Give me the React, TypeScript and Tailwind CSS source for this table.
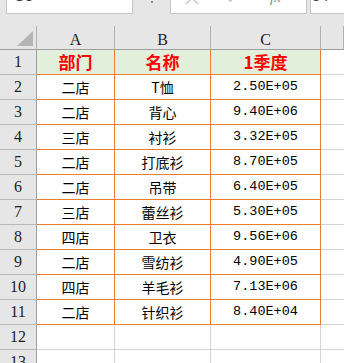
import React from 'react';
import { X, Check } from 'lucide-react';

const rows: [string, string, string][] = [
  ['二店', 'T恤', '2.50E+05'],
  ['二店', '背心', '9.40E+06'],
  ['三店', '衬衫', '3.32E+05'],
  ['二店', '打底衫', '8.70E+05'],
  ['二店', '吊带', '6.40E+05'],
  ['三店', '蕾丝衫', '5.30E+05'],
  ['四店', '卫衣', '9.56E+06'],
  ['二店', '雪纺衫', '4.90E+05'],
  ['四店', '羊毛衫', '7.13E+06'],
  ['二店', '针织衫', '8.40E+04'],
];

const rowHead =
  'h-[25px] flex items-center justify-center bg-[#e6e6e6] border-r border-b border-r-[#9e9e9e] border-b-[#b8b8b8] font-["Liberation_Serif",serif] text-[16px] text-[#1f1f1f]';
const orangeCell = 'h-[25px] flex items-center justify-center border-r border-b border-[#ed7d31]';
const plainCell = 'h-[25px] border-r border-b border-[#d4d4d4]';
const cjk = 'font-["Noto_Sans_CJK_SC",sans-serif]';

export default function App() {
  return (
    <div className="w-[344px] h-[363px] overflow-hidden bg-white">
      {/* formula bar, mostly scrolled out of view */}
      <div className="h-[26px] bg-[#e6e6e6] flex items-start">
        <div className="ml-[6px] w-[127px] h-[14px] bg-white border border-t-0 border-[#c6c6c6] overflow-hidden">
          <div className="-mt-[13px] pl-[7px] text-[15px] leading-[18px] text-[#333] font-['Liberation_Sans',sans-serif]">C3</div>
        </div>
        <div className="ml-[18px] mt-[1px] w-[2px] h-[2px] bg-[#8c8c8c]" />
        <div className="ml-[17px] w-[137px] h-[14px] bg-white border border-t-0 border-[#c6c6c6] overflow-hidden flex items-start">
          <X className="ml-[10px] -mt-[13px] w-[22px] h-[22px] text-[#c4c4c4]" strokeWidth={1.5} />
          <Check className="ml-[19px] -mt-[15px] w-[22px] h-[22px] text-[#c4c4c4]" strokeWidth={2.5} />
          <div className="ml-[26px] -mt-[11px] text-[15px] leading-[16px] italic text-[#8a8a8a] font-['Liberation_Serif',serif]">fx</div>
        </div>
        <div className="ml-[3px] flex-1 h-[14px] bg-white border border-t-0 border-r-0 border-[#c6c6c6] overflow-hidden">
          <div className="-mt-[13px] pl-[1px] text-[15px] leading-[18px] text-[#333] font-['Liberation_Sans',sans-serif]">54</div>
        </div>
      </div>

      <div className="grid grid-cols-[37px_78px_96px_110px_1fr]">
        {/* column headers */}
        <div className="h-[24px] bg-[#e6e6e6] border-r border-b border-r-[#b0b0b0] border-b-[#9e9e9e] flex items-end justify-end pr-[3px] pb-[3px]">
          <svg width="16" height="15" viewBox="0 0 16 15">
            <polygon points="16,0 16,15 0,15" fill="#b4b4b4" />
          </svg>
        </div>
        {['A', 'B', 'C', ''].map((c, i) => (
          <div
            key={i}
            className="h-[24px] bg-[#e6e6e6] border-r border-b border-r-[#b0b0b0] border-b-[#9e9e9e] flex items-center justify-center pt-[5px] font-['Liberation_Serif',serif] text-[16px] text-[#1f1f1f]"
          >
            {c}
          </div>
        ))}

        {/* row 1 header */}
        <div className={rowHead}>1</div>
        {['部门', '名称', '1季度'].map((h) => (
          <div key={h} className={`${orangeCell} bg-[#e2efda] ${cjk} text-[17px] font-bold text-[#ff0000]`}>
            {h}
          </div>
        ))}
        <div className="h-[25px] border-b border-[#d4d4d4]" />

        {rows.map((r, i) => (
          <React.Fragment key={i}>
            <div className={rowHead}>{i + 2}</div>
            <div className={`${orangeCell} ${cjk} text-[14px] text-black`}>{r[0]}</div>
            <div className={`${orangeCell} ${cjk} text-[14px] text-black`}>{r[1]}</div>
            <div className={`${orangeCell} font-['Liberation_Mono',monospace] text-[13.5px] text-black`}>{r[2]}</div>
            <div className="h-[25px] border-b border-[#d4d4d4]" />
          </React.Fragment>
        ))}

        {[12, 13].map((n) => (
          <React.Fragment key={n}>
            <div className={rowHead}>{n}</div>
            <div className={plainCell} />
            <div className={plainCell} />
            <div className={plainCell} />
            <div className="h-[25px] border-b border-[#d4d4d4]" />
          </React.Fragment>
        ))}
      </div>
    </div>
  );
}
